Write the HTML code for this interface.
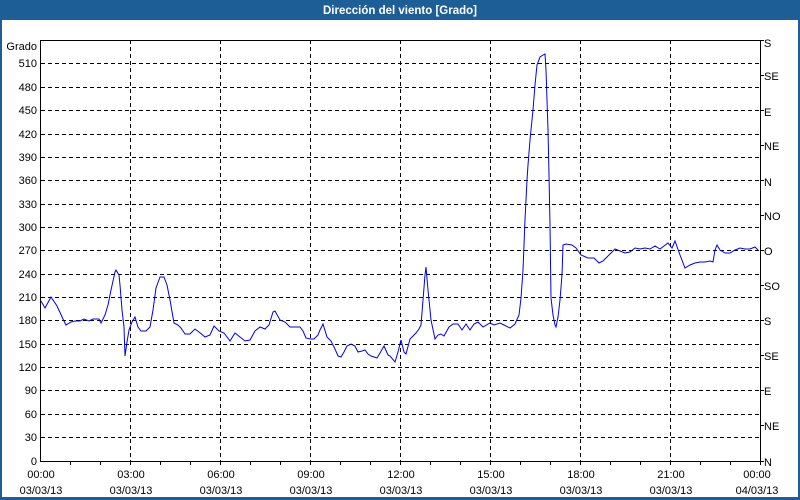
<!DOCTYPE html>
<html><head><meta charset="utf-8"><style>
body{margin:0;width:800px;height:500px;overflow:hidden;background:#fff;font-family:"Liberation Sans",sans-serif}
</style></head><body>
<svg width="800" height="500" xmlns="http://www.w3.org/2000/svg" style="display:block">
<rect x="0" y="0" width="800" height="500" fill="#1d5e96"/>
<rect x="2" y="20" width="796" height="477" fill="#fff"/>
<text x="400" y="14" font-size="11.5" font-weight="bold" fill="#fff" text-anchor="middle" font-family="Liberation Sans,sans-serif">Dirección del viento [Grado]</text>
<g stroke="#000" stroke-dasharray="4,3" stroke-width="1">
<line x1="41" x2="760" y1="63.5" y2="63.5"/><line x1="41" x2="760" y1="87.5" y2="87.5"/><line x1="41" x2="760" y1="110.5" y2="110.5"/><line x1="41" x2="760" y1="134.5" y2="134.5"/><line x1="41" x2="760" y1="157.5" y2="157.5"/><line x1="41" x2="760" y1="180.5" y2="180.5"/><line x1="41" x2="760" y1="204.5" y2="204.5"/><line x1="41" x2="760" y1="227.5" y2="227.5"/><line x1="41" x2="760" y1="250.5" y2="250.5"/><line x1="41" x2="760" y1="274.5" y2="274.5"/><line x1="41" x2="760" y1="297.5" y2="297.5"/><line x1="41" x2="760" y1="320.5" y2="320.5"/><line x1="41" x2="760" y1="344.5" y2="344.5"/><line x1="41" x2="760" y1="367.5" y2="367.5"/><line x1="41" x2="760" y1="390.5" y2="390.5"/><line x1="41" x2="760" y1="414.5" y2="414.5"/><line x1="41" x2="760" y1="437.5" y2="437.5"/>
<line x1="130.5" x2="130.5" y1="40" y2="461"/><line x1="220.5" x2="220.5" y1="40" y2="461"/><line x1="310.5" x2="310.5" y1="40" y2="461"/><line x1="400.5" x2="400.5" y1="40" y2="461"/><line x1="490.5" x2="490.5" y1="40" y2="461"/><line x1="580.5" x2="580.5" y1="40" y2="461"/><line x1="670.5" x2="670.5" y1="40" y2="461"/>
</g>
<g stroke="#000" stroke-width="1" fill="none">
<path d="M40.5 40V461.5H760.5V40M40.5 40.5H760.5"/>
<path d="M70.5 461v4M100.5 461v4M130.5 461v4M160.5 461v4M190.5 461v4M220.5 461v4M250.5 461v4M280.5 461v4M310.5 461v4M340.5 461v4M370.5 461v4M400.5 461v4M430.5 461v4M460.5 461v4M490.5 461v4M520.5 461v4M550.5 461v4M580.5 461v4M610.5 461v4M640.5 461v4M670.5 461v4M700.5 461v4M730.5 461v4M760.5 461v4"/>
<path d="M760 40.5h4M760 75.5h4M760 110.5h4M760 145.5h4M760 180.5h4M760 215.5h4M760 250.5h4M760 285.5h4M760 320.5h4M760 355.5h4M760 390.5h4M760 425.5h4M760 461.5h4"/>
</g>
<g font-size="11" fill="#000" text-anchor="end">
<text x="37" y="50">Grado</text>
<text x="37" y="67">510</text><text x="37" y="91">480</text><text x="37" y="114">450</text><text x="37" y="138">420</text><text x="37" y="161">390</text><text x="37" y="184">360</text><text x="37" y="208">330</text><text x="37" y="231">300</text><text x="37" y="254">270</text><text x="37" y="278">240</text><text x="37" y="301">210</text><text x="37" y="324">180</text><text x="37" y="348">150</text><text x="37" y="371">120</text><text x="37" y="394">90</text><text x="37" y="418">60</text><text x="37" y="441">30</text><text x="37" y="465">0</text>
</g>
<g font-size="11" fill="#000">
<text x="764" y="47">S</text><text x="764" y="80">SE</text><text x="764" y="116">E</text><text x="764" y="150">NE</text><text x="764" y="186">N</text><text x="764" y="220">NO</text><text x="764" y="255">O</text><text x="764" y="290">SO</text><text x="764" y="325">S</text><text x="764" y="360">SE</text><text x="764" y="395">E</text><text x="764" y="430">NE</text><text x="764" y="466">N</text>
</g>
<g font-size="11" fill="#000" text-anchor="middle">
<text x="41" y="478">00:00</text><text x="41" y="494">03/03/13</text>
<text x="131" y="478">03:00</text><text x="131" y="494">03/03/13</text>
<text x="221" y="478">06:00</text><text x="221" y="494">03/03/13</text>
<text x="311" y="478">09:00</text><text x="311" y="494">03/03/13</text>
<text x="401" y="478">12:00</text><text x="401" y="494">03/03/13</text>
<text x="491" y="478">15:00</text><text x="491" y="494">03/03/13</text>
<text x="581" y="478">18:00</text><text x="581" y="494">03/03/13</text>
<text x="671" y="478">21:00</text><text x="671" y="494">03/03/13</text>
<text x="757" y="478">00:00</text><text x="757" y="494">04/03/13</text>
</g>
<polyline fill="none" stroke="#0000ee" stroke-width="1" points="41,301 45,308 51,297 57,306 63,319 66,325 71,322 75,321 80,321 84,319 89,321 93,319 99,319 101,323 105,315 108,305 111,290 115,272 116,270 119,275 120,285 122,310 124,327 125,356 127,342 129,330 132,322 135,317 138,327 141,331 146,331 150,327 153,310 156,288 160,277 164,277 167,285 170,300 174,323 178,325 181,328 185,334 190,334 195,329 199,332 205,337 210,335 214,326 219,331 224,333 230,341 235,333 240,337 245,341 250,340 255,331 260,327 265,329 269,325 273,312 275,311 280,320 285,322 290,327 295,327 300,327 303,331 306,338 310,339 314,339 318,335 320,330 323,324 327,337 331,341 335,349 338,356 341,357 344,352 347,346 351,344 355,346 358,352 362,351 365,350 368,354 371,356 377,358 380,353 384,346 388,355 390,356 395,362 398,352 401,340 404,352 406,354 410,339 416,333 419,329 421,325 425,275 426,267 428,290 431,320 435,339 438,335 441,334 444,336 449,327 453,324 458,324 462,330 466,324 470,330 474,324 478,322 483,327 490,323 494,325 500,323 504,325 510,328 515,324 519,315 521,298 523,270 525,220 527,180 528,165 530,140 533,110 535,85 537,65 540,57 543,55 545,54 546,70 548,130 549,175 550,225 551,298 553,315 555,325 556,327 558,317 560,300 562,275 563,245 566,244 572,245 576,248 581,255 588,258 594,258 599,263 603,261 606,258 611,253 615,249 620,251 625,253 630,252 635,248 640,249 645,248 650,249 655,246 660,249 664,246 668,243 672,248 675,241 680,255 685,268 690,265 695,263 700,262 705,262 710,261 713,262 715,250 717,245 720,250 725,253 730,253 735,250 740,248 745,249 750,249 755,247 758,250"/>
</svg>
</body></html>
